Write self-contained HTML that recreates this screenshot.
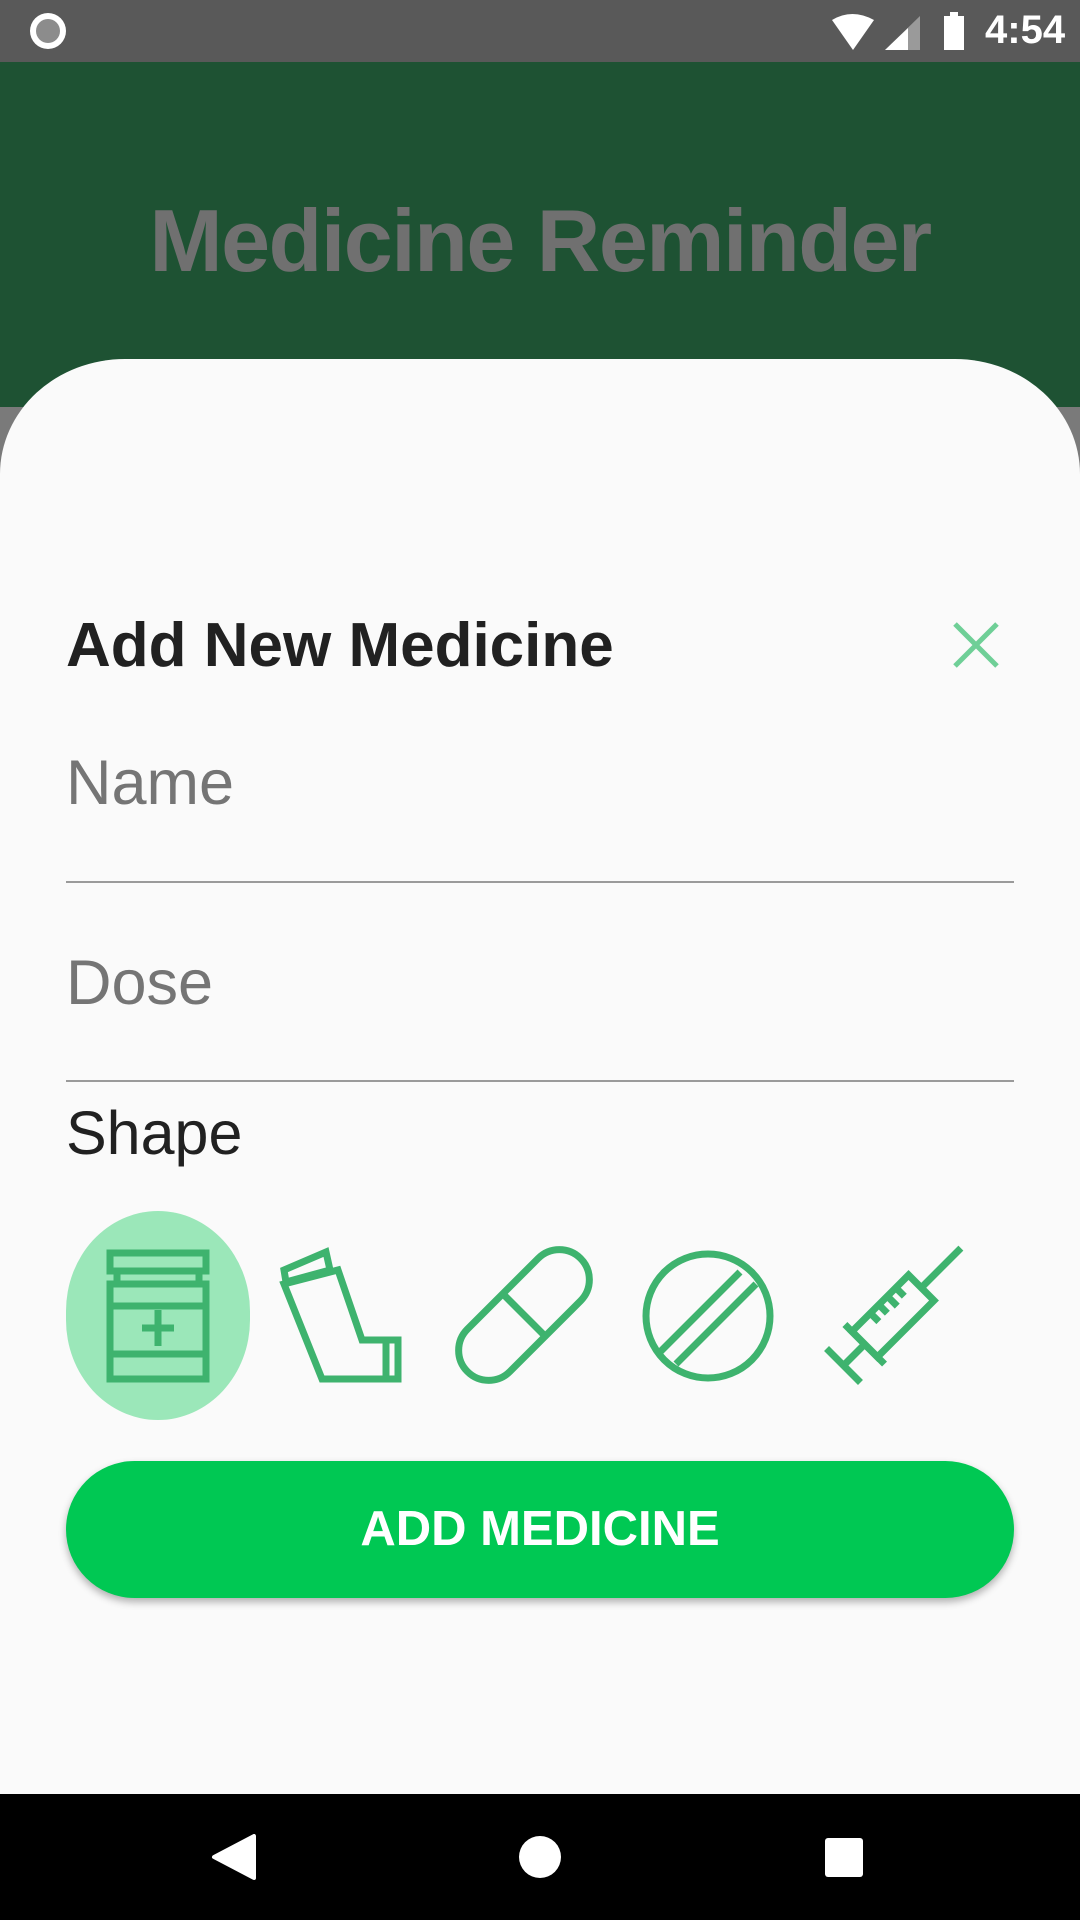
<!DOCTYPE html>
<html><head><meta charset="utf-8"><style>
*{margin:0;padding:0;box-sizing:border-box}
body{width:1080px;height:1920px;position:relative;overflow:hidden;background:#7a7a7a;font-family:"Liberation Sans",sans-serif}
.abs{position:absolute}
</style></head><body>
<div class="abs" style="left:0;top:0;width:1080px;height:62px;background:#595959"></div>
<div class="abs" style="left:30px;top:13px;width:36px;height:36px;border-radius:50%;background:#fff"></div>
<div class="abs" style="left:36px;top:19px;width:24px;height:24px;border-radius:50%;background:#8c8c8c"></div>
<svg class="abs" style="left:830px;top:12px" width="100" height="40" viewBox="0 0 100 40">
<path d="M2 8 Q22 -4 44 8 L23 38 Z" fill="#fff"/>
<path d="M55 38 L90 4 L90 38 Z" fill="#9a9a9a"/><path d="M55 38 L78 16 L78 38 Z" fill="#fff"/>
</svg>
<div class="abs" style="left:944px;top:16px;width:20px;height:34px;background:#fff"></div>
<div class="abs" style="left:950px;top:12px;width:8px;height:5px;background:#fff"></div>
<div class="abs" style="left:985px;top:8px;color:#fff;font-size:40px;font-weight:bold">4:54</div>
<div class="abs" style="left:0;top:62px;width:1080px;height:345px;background:#1e5233"></div>
<div class="abs" style="left:0;top:190px;width:1080px;text-align:center;color:#707070;font-size:88px;font-weight:bold;letter-spacing:-1.5px">Medicine Reminder</div>
<div class="abs" style="left:0;top:359px;width:1080px;height:1435px;background:#fafafa;border-radius:125px 125px 0 0/115px 115px 0 0"></div>
<div class="abs" style="left:66px;top:610px;color:#212121;font-size:62px;font-weight:bold">Add New Medicine</div>
<svg class="abs" style="left:952px;top:621px" width="48" height="48" viewBox="0 0 48 48"><path d="M3 3L45 45M45 3L3 45" stroke="#6fcf97" stroke-width="5"/></svg>
<div class="abs" style="left:66px;top:747px;color:#757575;font-size:63px">Name</div>
<div class="abs" style="left:66px;top:881px;width:948px;height:2px;background:#9a9a9a"></div>
<div class="abs" style="left:66px;top:947px;color:#757575;font-size:63px">Dose</div>
<div class="abs" style="left:66px;top:1080px;width:948px;height:2px;background:#9a9a9a"></div>
<div class="abs" style="left:66px;top:1098px;color:#212121;font-size:61px">Shape</div>
<div class="abs" style="left:66px;top:1211px;width:184px;height:209px;border-radius:92px/100px;background:#9be7b9"></div>
<svg class="abs" style="left:0;top:1240px" width="1080" height="150" viewBox="0 0 1080 150" fill="none" stroke="#3eb36e" stroke-width="7">
<rect x="110" y="13" width="96" height="18"/>
<path d="M117 31V44M199 31V44"/>
<rect x="110" y="44" width="96" height="95"/>
<path d="M110 66H206M110 114H206M158 70V106M142 88H174"/>
<path d="M286 42L284 30L326 12L330 30Z"/>
<path d="M284 44L338 30L362 100H398V139H322Z M386 100V139"/>
<g transform="translate(524 75) rotate(-45)"><rect x="-80" y="-30" width="160" height="60" rx="30"/><path d="M0 -30V30"/></g>
<circle cx="708" cy="76" r="62"/>
<path d="M660 112L740 32M676 124L756 44"/>
<g transform="translate(893 76) rotate(-45)"><rect x="-40" y="-18" width="80" height="36"/><path d="M40 0H96M-40 0H-70M-70 -24V24M-40 -28V28M10 -18V-4M22 -18V-6M-2 -18V-6M-14 -18V-6"/></g>
</svg>
<div class="abs" style="left:66px;top:1461px;width:948px;height:137px;border-radius:69px;background:#00c853;box-shadow:0 4px 8px rgba(0,0,0,.3);color:#fff;font-size:49px;font-weight:bold;text-align:center;line-height:137px">ADD MEDICINE</div>
<div class="abs" style="left:0;top:1794px;width:1080px;height:126px;background:#000"></div>
<svg class="abs" style="left:210px;top:1834px" width="50" height="46" viewBox="0 0 50 46"><path d="M44 2V44L4 23Z" fill="#fff" stroke="#fff" stroke-width="4" stroke-linejoin="round"/></svg>
<div class="abs" style="left:519px;top:1836px;width:42px;height:42px;border-radius:50%;background:#fff"></div>
<div class="abs" style="left:825px;top:1838px;width:38px;height:39px;border-radius:3px;background:#fff"></div>
</body></html>
